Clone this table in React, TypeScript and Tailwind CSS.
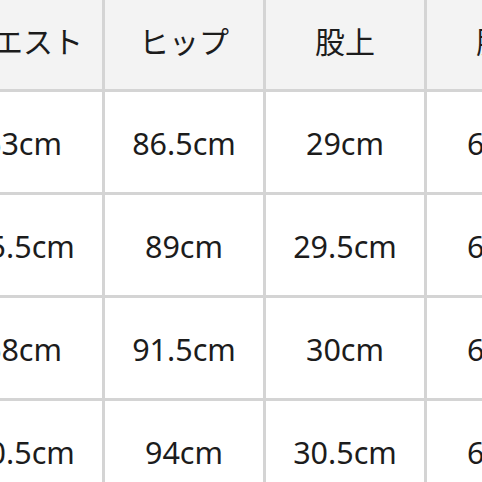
import React from 'react';

const headers = ['ウエスト', 'ヒップ', '股上', '股下'];

const rows = [
  ['63cm', '86.5cm', '29cm', '66cm'],
  ['65.5cm', '89cm', '29.5cm', '67cm'],
  ['68cm', '91.5cm', '30cm', '68cm'],
  ['70.5cm', '94cm', '30.5cm', '69cm'],
];

const App: React.FC = () => {
  return (
    <div className="w-[482px] h-[482px] overflow-hidden bg-white">
      <div
        className="-ml-[56px] -mt-[10px] grid w-max grid-cols-[158px_158px_158px_158px] grid-rows-[99px_100px_100px_100px_100px] gap-[3px] bg-[#d4d4d4] text-[#1c1c1c]"
        style={{ fontFamily: '"Noto Sans", "Noto Sans CJK JP", sans-serif' }}
      >
        {headers.map((h) => (
          <div
            key={h}
            className="flex items-center justify-center bg-[#f3f3f3] text-[30px] pt-[1px]"
            style={{ fontFamily: '"Noto Sans CJK JP", sans-serif' }}
          >
            {h}
          </div>
        ))}
        {rows.map((r, i) =>
          r.map((v, j) => (
            <div key={`${i}-${j}`} className="flex items-center justify-center bg-white text-[30.5px] pt-[4px]">
              {v}
            </div>
          ))
        )}
      </div>
    </div>
  );
};

export default App;
